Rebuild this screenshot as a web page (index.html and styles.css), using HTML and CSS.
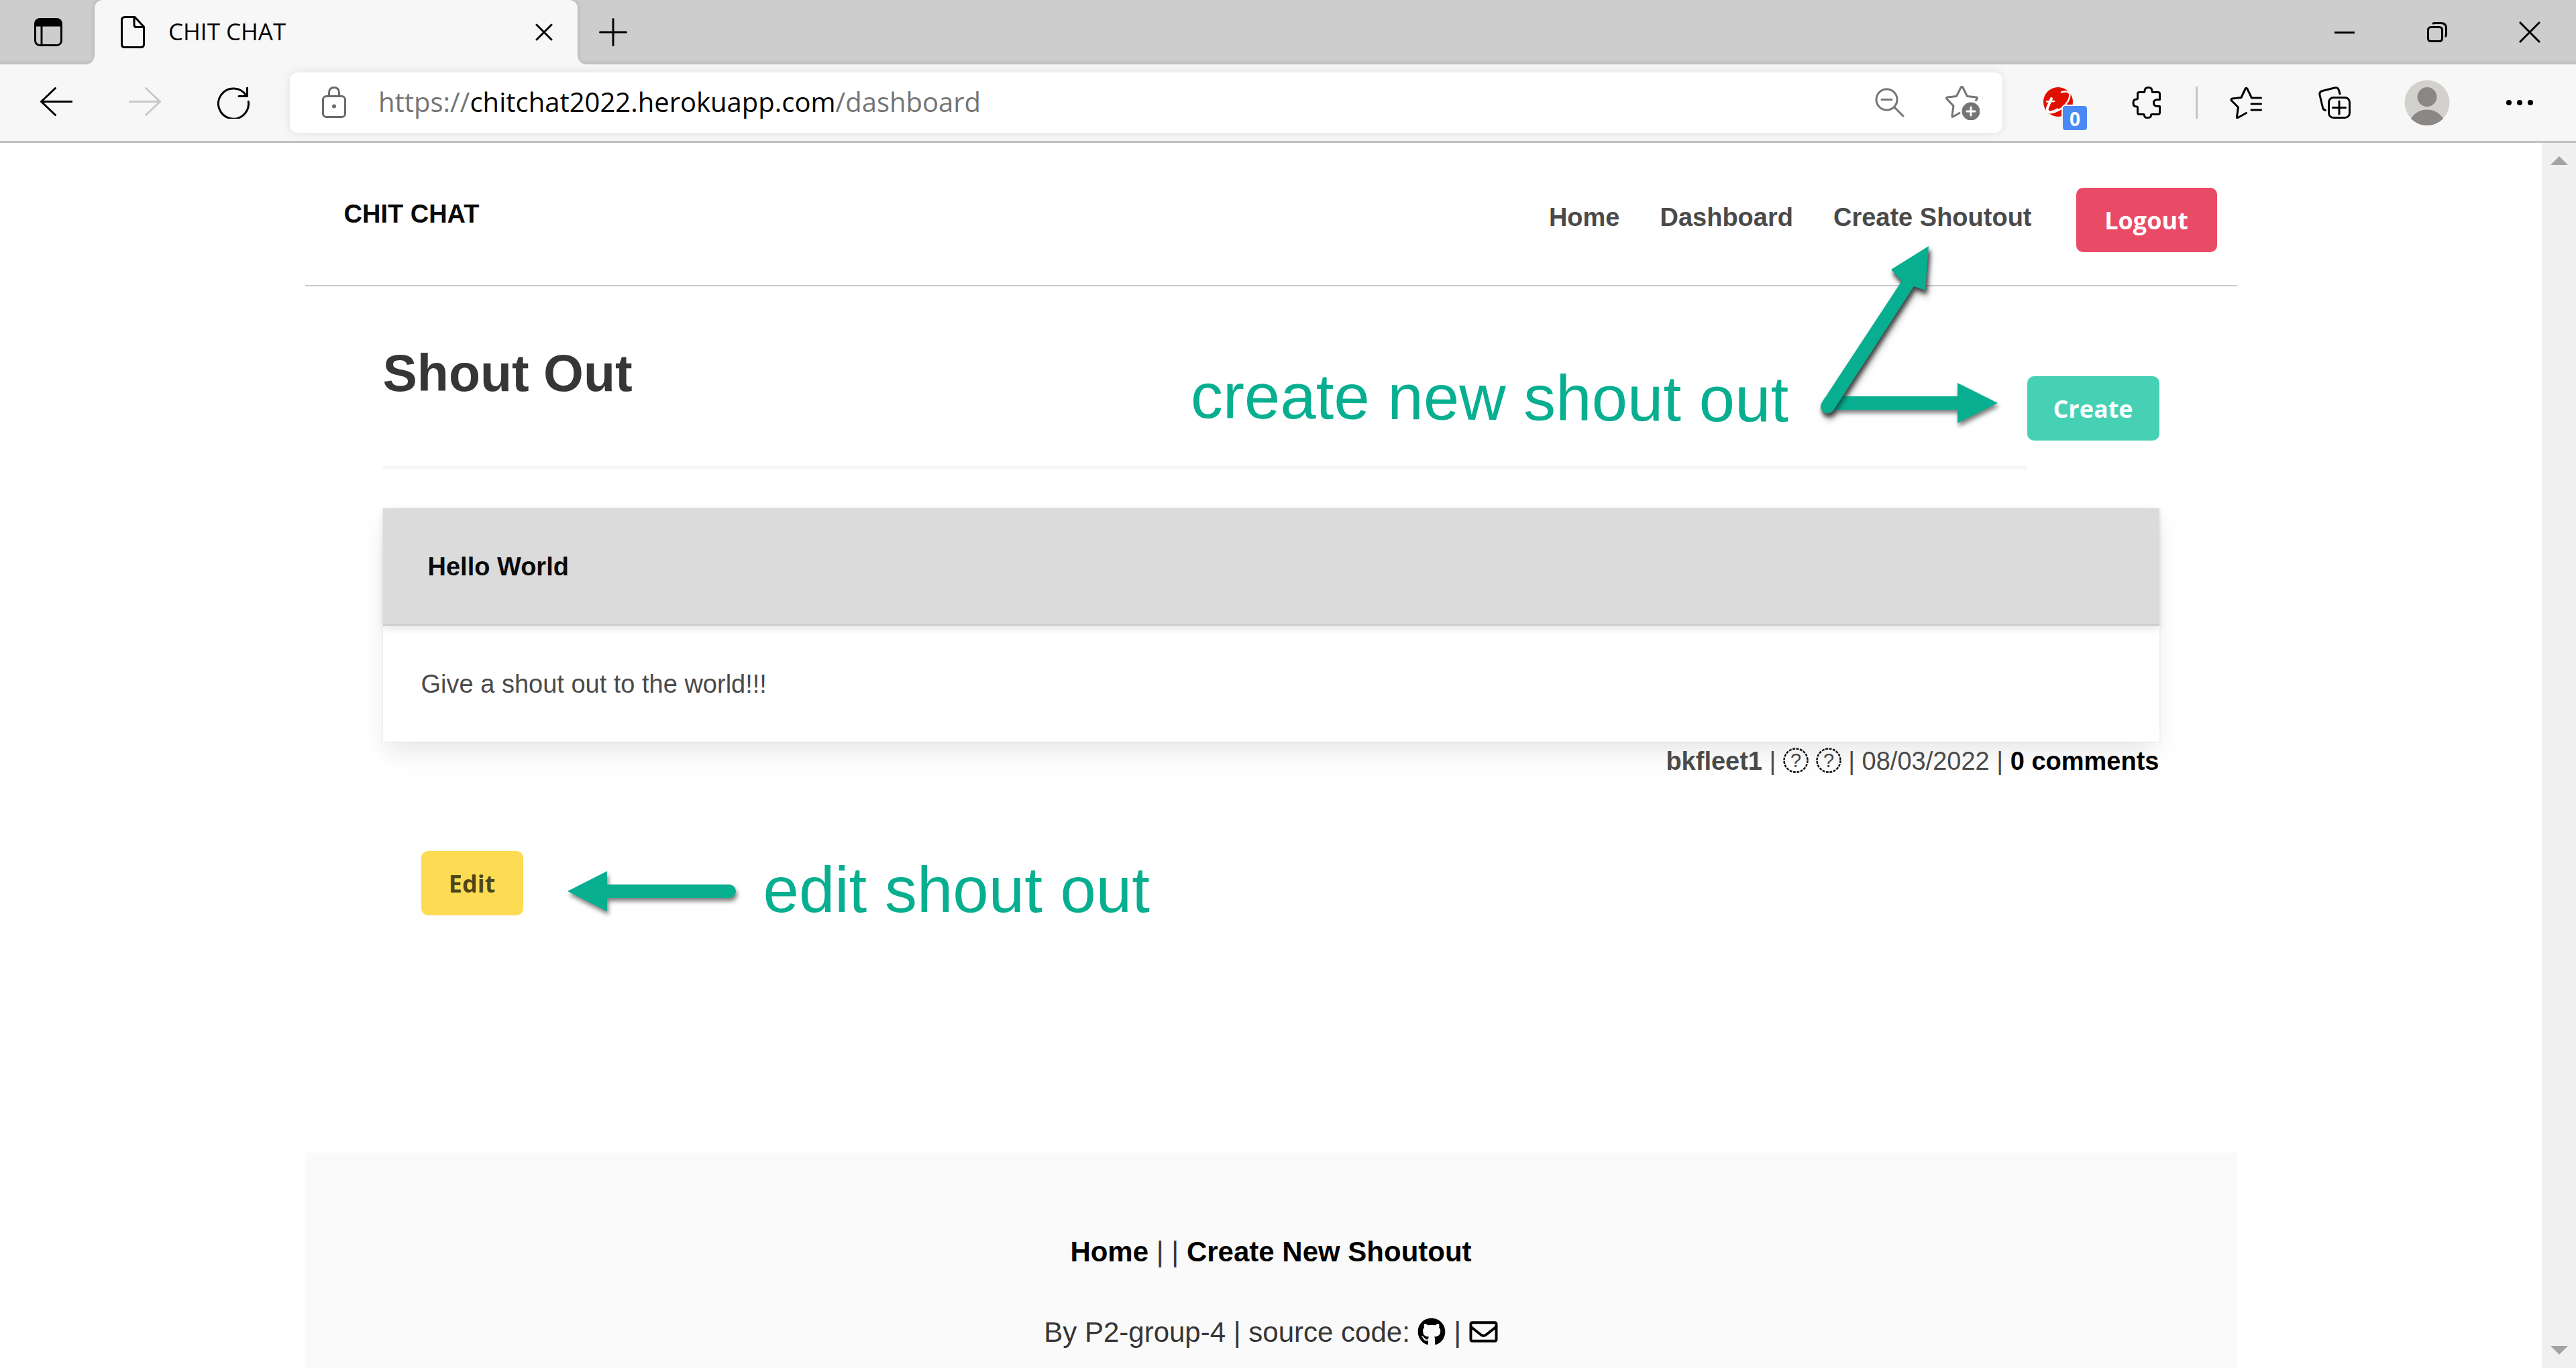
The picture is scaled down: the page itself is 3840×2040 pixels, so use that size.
FILE: index.html
```html
<!DOCTYPE html>
<html lang="en">
<head>
<meta charset="utf-8">
<title>CHIT CHAT</title>
<link rel="stylesheet" href="styles.css">
</head>
<body>
<div class="tabstrip">
  <button class="chrome-btn tab-actions" aria-label="Tab actions menu">
    <svg width="42" height="42" viewBox="0 0 42 42" fill="none" stroke="#000" stroke-width="3"><rect x="1.5" y="1.5" width="39" height="39" rx="7"/><path d="M11 12v28"/><path d="M2 11V8q0-6 6-6h26q6 0 6 6v3z" fill="#000"/></svg>
  </button>
  <div class="tab">
    <svg width="36" height="48" viewBox="0 0 36 48" fill="none" stroke="#000" stroke-width="3" stroke-linejoin="round"><path d="M6 1.500h15L34.500 16v26q0 4.500-4.500 4.500H6q-4.500 0-4.500-4.500V6q0-4.500 4.500-4.500zM20 2v11q0 3.500 3.500 3.500h11"/></svg>
    <span class="tab-title">CHIT CHAT</span>
    <button class="chrome-btn tab-close" aria-label="Close tab">
      <svg width="26" height="26" viewBox="0 0 26 26" fill="none" stroke="#000" stroke-width="3" stroke-linecap="round"><path d="M2 2l22 22M24 2L2 24"/></svg>
    </button>
  </div>
  <button class="chrome-btn new-tab" aria-label="New tab">
    <svg width="42" height="42" viewBox="0 0 42 42" fill="none" stroke="#000" stroke-width="3" stroke-linecap="round"><path d="M21 1.500v39M1.500 21h39"/></svg>
  </button>
  <div class="window-controls">
    <button class="chrome-btn window-btn" aria-label="Minimize"><svg width="32" height="32" viewBox="0 0 32 32" stroke="#000" stroke-width="3"><path d="M1 16.500h30"/></svg></button>
    <button class="chrome-btn window-btn" aria-label="Restore"><svg width="30" height="30" viewBox="0 0 30 30" fill="none" stroke="#000" stroke-width="3"><rect x="1.500" y="7.500" width="21" height="21" rx="4"/><path d="M8 2.500Q9.500 1.500 12 1.500h9q7.500 0 7.500 7.500v9q0 2.500-1.500 4"/></svg></button>
    <button class="chrome-btn window-btn" aria-label="Close"><svg width="32" height="32" viewBox="0 0 32 32" stroke="#000" stroke-width="3"><path d="M1 1l30 30M31 1L1 31"/></svg></button>
  </div>
</div>

<div class="toolbar">
  <button class="chrome-btn tool" aria-label="Back"><svg width="48" height="48" viewBox="0 0 48 48" fill="none" stroke="#000" stroke-width="3" stroke-linecap="round" stroke-linejoin="round"><path d="M22.500 2.500L1.500 22.500l21 20M2 22.500h45"/></svg></button>
  <button class="chrome-btn tool" aria-label="Forward" disabled><svg width="48" height="48" viewBox="0 0 48 48" fill="none" stroke="#c8c8c8" stroke-width="3" stroke-linecap="round" stroke-linejoin="round"><path d="M25.500 2.500l21 20-21 20M46 22.500H1.500"/></svg></button>
  <button class="chrome-btn tool" aria-label="Refresh"><svg width="48" height="48" viewBox="0 0 48 48" fill="none" stroke="#000" stroke-width="3" stroke-linecap="round" stroke-linejoin="round"><path d="M46.300 22.500A22.500 22.500 0 1 1 43 13.500M44.500 2v12.500H32"/></svg></button>
  <div class="address">
    <svg class="lock" width="36" height="48" viewBox="0 0 36 48" fill="none" stroke="#6b6b6b" stroke-width="3"><rect x="1.500" y="14.500" width="33" height="31" rx="5"/><path d="M10.500 14V9.500q0-8 7.500-8t7.500 8V14"/><circle cx="18" cy="29.500" r="3" fill="#6b6b6b" stroke="none"/></svg>
    <div class="url" role="textbox" aria-label="Address and search bar"><span>https://</span><span class="url-host">chitchat2022.herokuapp.com</span><span>/dashboard</span></div>
    <button class="chrome-btn address-btn" aria-label="Zoom"><svg width="44" height="44" viewBox="0 0 44 44" fill="none" stroke="#757575" stroke-width="3" stroke-linecap="round"><circle cx="17.500" cy="17.500" r="15.500"/><path d="M10 17.500h15M29 29l13 13"/></svg></button>
    <button class="chrome-btn address-btn" aria-label="Add to favorites"><svg width="52" height="52" viewBox="0 0 52 52" fill="none" stroke="#757575" stroke-width="3" stroke-linejoin="round" stroke-linecap="round"><path d="M22 41.500L12.500 47q-2 1-1.500-1.500L13 31 3 20.500q-1.500-2 1-2.500L17.500 16.500 24 3.500q1.500-2.500 3 0l6.500 13L47 18q2.500 .5 1 2.500l-1.500 2"/><circle cx="39" cy="39" r="13.500" fill="#757575" stroke="none"/><path d="M39 33v12M33 39h12" stroke="#fff"/></svg></button>
  </div>
  <button class="chrome-btn tool" aria-label="Trend Micro extension">
    <span class="ext"><svg width="46" height="46" viewBox="0 0 46 46" fill="none" stroke="#fff" stroke-linecap="round"><circle cx="22" cy="22" r="22" fill="#e01000" stroke="none"/><path d="M27 7.500Q39 4 39.500 12 39 22 27 31.500 19 37.500 11 38" stroke-width="2.500"/><path d="M12 17L6 31q-1.500 6.500 5 6.500 5-.5 10-4" stroke-width="4"/><path d="M5 21.500l11-.5" stroke-width="2.500"/></svg><span class="badge">0</span></span>
  </button>
  <button class="chrome-btn tool" aria-label="Extensions"><svg width="48" height="48" viewBox="0 0 48 48" fill="none" stroke="#000" stroke-width="3" stroke-linejoin="round"><path d="M12 8.500h6.500q1.500 0 1.500-1.500 0-5.500 5.500-5.500T31 7q0 1.500 1.500 1.500H40q2.500 0 2.500 2.500v8.500h-3.500q-5.500 0-5.500 5t5.500 5h3.500V39q0 2.500-2.500 2.500h-9q-1.500 0-1.500 1.500 0 3.500-5 3.500t-5-3.500q0-1.500-1.500-1.500H12q-2.500 0-2.500-2.500v-7.500q0-1.500-1.500-1.500-5 0-5-5.500t5-5.500q1.500 0 1.500-1.500V11q0-2.500 2.500-2.500z"/></svg></button>
  <div class="divider"></div>
  <button class="chrome-btn tool" aria-label="Favorites"><svg width="48" height="48" viewBox="0 0 48 48" fill="none" stroke="#000" stroke-width="3" stroke-linejoin="round" stroke-linecap="round"><path d="M24.500 39.500l-12.500 7q-2 1-1.500-1.500L12.500 31 2.500 21q-1.500-2.500 1-3L17 16.500 23 3.500q1.500-2.500 3 0l6.500 13.500h14M32 26h14.500M32 35h14.500"/></svg></button>
  <button class="chrome-btn tool" aria-label="Collections"><svg width="48" height="48" viewBox="0 0 48 48" fill="none" stroke="#000" stroke-width="3" stroke-linejoin="round" stroke-linecap="round"><rect x="15.500" y="16.500" width="31" height="30" rx="7"/><path d="M31 22v19M21.500 31.500h19M10.500 35.500q-3-.5-4-4L2 12.500q-1-4.500 4-6L24 2q5-1.500 6.500 3.500l1.500 5.500"/></svg></button>
  <button class="chrome-btn tool tool-wide" aria-label="Profile"><svg width="68" height="68" viewBox="0 0 68 68"><circle cx="34" cy="34" r="33.500" fill="#d3d1cd"/><circle cx="34" cy="25.500" r="14.500" fill="#8b8784"/><path d="M10 58a28 28 0 0 1 48 0 33.500 33.500 0 0 1-48 0z" fill="#8b8784"/></svg></button>
  <button class="chrome-btn tool" aria-label="Settings and more"><svg width="42" height="10" viewBox="0 0 42 10"><circle cx="5" cy="5" r="4"/><circle cx="21" cy="5" r="4"/><circle cx="37" cy="5" r="4"/></svg></button>
</div>

<div class="viewport">
  <div class="page">
    <header class="navbar">
      <a class="brand" href="#">CHIT CHAT</a>
      <nav class="nav-links">
        <a href="#">Home</a>
        <a href="#">Dashboard</a>
        <a href="#">Create Shoutout</a>
      </nav>
      <button class="button is-danger">Logout</button>
    </header>

    <main class="content">
      <div class="title-row">
        <div class="title-block">
          <h1>Shout Out</h1>
          <hr>
        </div>
        <button class="button is-primary">Create</button>
        <div class="note create-note">
          <span class="note-text tilted">create new shout out</span>
          <svg class="shadowed" width="300" height="300" viewBox="0 0 300 300" fill="#07af90"><path d="M26 240h191v-20l60 30-60 30v-20H26a10 10 0 0 1 0-20z"/><path class="shadowed" d="M15 249L134 68l-16-17 56-35-5 66-17-6L32 261a10 10 0 0 1-17-12z"/></svg>
        </div>
      </div>

      <article class="card">
        <h2 class="card-header">Hello World</h2>
        <p class="card-body">Give a shout out to the world!!!</p>
      </article>
      <div class="meta">
        <b>bkfleet1</b> |
        <svg width="38" height="38" viewBox="0 0 38 38"><circle cx="19" cy="19" r="17.500" fill="none" stroke="#111" stroke-width="2.500" stroke-dasharray="4 1.500"/><text x="19" y="29" text-anchor="middle" font-size="29" fill="#444">?</text></svg>
        <svg width="38" height="38" viewBox="0 0 38 38"><circle cx="19" cy="19" r="17.500" fill="none" stroke="#111" stroke-width="2.500" stroke-dasharray="4 1.500"/><text x="19" y="29" text-anchor="middle" font-size="29" fill="#444">?</text></svg>
        | 08/03/2022 | <a href="#">0 comments</a>
      </div>

      <div class="edit-row">
        <button class="button is-warning">Edit</button>
        <svg class="edit-arrow shadowed" width="260" height="120" viewBox="0 0 260 120" fill="#07af90"><path d="M0 60l59-30v20h182a10 10 0 0 1 0 20H59v20z"/></svg>
        <span class="note-text">edit shout out</span>
      </div>
    </main>

    <footer class="footer">
      <p><a href="#">Home</a> | | <a href="#">Create New Shoutout</a></p>
      <p>By P2-group-4 | source code:
        <a href="#" aria-label="GitHub"><svg class="footer-icon" width="42" height="42" viewBox="0 0 496 512"><path d="M165.900 397.400c0 2-2.300 3.600-5.200 3.600-3.300.3-5.600-1.300-5.600-3.600 0-2 2.300-3.600 5.200-3.600 3-.3 5.600 1.300 5.600 3.600zm-31.100-4.500c-.7 2 1.300 4.300 4.300 4.900 2.600 1 5.600 0 6.200-2s-1.300-4.300-4.300-5.200c-2.600-.7-5.500.3-6.200 2.300zm44.200-1.700c-2.900.7-4.900 2.600-4.600 4.900.3 2 2.900 3.300 5.900 2.600 2.900-.7 4.900-2.600 4.600-4.600-.3-1.900-3-3.200-5.900-2.900zM244.800 8C106.100 8 0 113.300 0 252c0 110.900 69.800 205.800 169.500 239.200 12.800 2.300 17.300-5.600 17.300-12.100 0-6.200-.3-40.400-.3-61.400 0 0-70 15-84.700-29.800 0 0-11.400-29.100-27.800-36.600 0 0-22.900-15.700 1.600-15.400 0 0 24.900 2 38.600 25.800 21.900 38.600 58.600 27.500 72.900 20.900 2.300-16 8.800-27.100 16-33.700-55.900-6.200-112.300-14.300-112.300-110.500 0-27.500 7.600-41.300 23.600-58.900-2.600-6.500-11.100-33.300 2.600-67.900 20.900-6.500 69 27 69 27 20-5.600 41.500-8.500 62.800-8.500s42.800 2.900 62.800 8.500c0 0 48.100-33.600 69-27 13.700 34.700 5.200 61.400 2.600 67.900 16 17.700 25.800 31.500 25.800 58.900 0 96.500-58.900 104.200-114.800 110.500 9.200 7.900 17 22.900 17 46.400 0 33.700-.3 75.400-.3 83.600 0 6.500 4.600 14.400 17.300 12.100C428.200 457.800 496 362.900 496 252 496 113.300 383.500 8 244.800 8z"/></svg></a>
        | <a href="#" aria-label="Email"><svg class="footer-icon" width="43" height="42" viewBox="0 0 512 512"><path d="M464 64H48C21.490 64 0 85.490 0 112v288c0 26.510 21.490 48 48 48h416c26.510 0 48-21.490 48-48V112c0-26.510-21.490-48-48-48zm0 48v40.805c-22.422 18.259-58.168 46.651-134.587 106.490-16.841 13.247-50.201 45.072-73.413 44.701-23.208.375-56.579-31.459-73.413-44.701C106.180 199.465 70.425 171.067 48 152.805V112h416zM48 400V214.398c22.914 18.251 55.409 43.862 104.938 82.646 21.857 17.205 60.134 55.186 103.062 54.955 42.717.231 80.509-37.199 103.053-54.947 49.528-38.783 82.032-64.401 104.947-82.653V400H48z"/></svg></a></p>
    </footer>
  </div>
  <div class="scrollbar" aria-hidden="true">
    <svg width="26" height="13" viewBox="0 0 26 13" fill="#a3a3a3"><path d="M13 0l13 13H0z"/></svg>
    <svg width="26" height="13" viewBox="0 0 26 13" fill="#a3a3a3"><path d="M0 0h26L13 13z"/></svg>
  </div>
</div>
</body>
</html>
```
FILE: styles.css
```css
* { box-sizing: border-box; }
html, body { margin: 0; }
body {
  min-height: 100vh;
  display: flex;
  flex-direction: column;
  background: #fff;
  color: #4a4a4a;
  font: 38px/58px "Liberation Sans", Arial, sans-serif;
}
h1, h2, p, hr { margin: 0; }
a { color: inherit; text-decoration: none; font-weight: bold; }
svg { display: block; flex: none; }

/* browser chrome */
.chrome-btn {
  display: flex;
  align-items: center;
  justify-content: center;
  border: 0;
  padding: 0;
  background: none;
}
.tabstrip {
  display: flex;
  height: 96px;
  background: linear-gradient(#cdcdcd 88px, #bdbdbd);
  font-family: "Open Sans", "Noto Sans", sans-serif;
}
.tab-actions { width: 141px; padding-left: 3px; }
.tab {
  position: relative;
  display: flex;
  align-items: center;
  width: 720px;
  padding: 0 37px 0 39px;
  border-radius: 12px 12px 0 0;
  background: #f7f7f7;
  box-shadow: 0 0 6px rgba(0, 0, 0, .2);
  clip-path: inset(0 -12px);
}
.tab::before, .tab::after {
  content: "";
  position: absolute;
  bottom: 0;
  width: 12px;
  height: 12px;
}
.tab::before { left: -12px; background: radial-gradient(circle at 0 0, transparent 11px, #f7f7f7 12px); }
.tab::after { right: -12px; background: radial-gradient(circle at 100% 0, transparent 11px, #f7f7f7 12px); }
.tab-title { flex: 1; padding-left: 35px; font-size: 35px; line-height: 44px; padding-bottom: 2px; color: #000; }
.new-tab { width: 105px; }
.window-controls { display: flex; margin-left: auto; }
.window-btn { width: 138px; }

.toolbar {
  display: flex;
  align-items: center;
  height: 117px;
  padding: 0 18px;
  border-bottom: 3px solid #c0c0c0;
  background: #f7f7f7;
}
.tool { width: 132px; height: 96px; }
.tool-wide { width: 144px; }
.divider { width: 3px; height: 48px; margin: 0 6px; background: #c4c4c4; }
.address {
  flex: 1;
  display: flex;
  align-items: center;
  height: 90px;
  margin: 0 18px;
  padding: 0 6px 0 48px;
  border-radius: 12px;
  background: #fff;
  box-shadow: 0 0 14px rgba(0, 0, 0, .1);
}
.url {
  flex: 1;
  padding: 0 0 2px 48px;
  font: 40px/58px "Open Sans", "Noto Sans", sans-serif;
  color: #757575;
}
.url-host { color: #000; }
.address-btn { width: 108px; height: 84px; }
.ext { position: relative; }
.badge {
  position: absolute;
  left: 29px;
  top: 28px;
  width: 36px;
  height: 36px;
  border-radius: 4px;
  background: #4a89f5;
  box-shadow: 0 0 0 2px #f7f7f7;
  color: #fff;
  font: bold 28px/38px "Open Sans", sans-serif;
}

/* page viewport */
.viewport { flex: 1; display: flex; }
.page {
  flex: 1;
  display: flex;
  flex-direction: column;
  max-width: 2880px;
  margin: 0 auto;
}
.scrollbar {
  display: flex;
  flex-direction: column;
  justify-content: space-between;
  align-items: center;
  width: 51px;
  padding: 20px 0;
  background: #f0f0f0;
}

.button {
  flex: none;
  height: 96px;
  padding: 2px 0 0;
  border: 0;
  border-radius: 10px;
  font: bold 36px/58px "Open Sans", "Noto Sans", sans-serif;
  color: #fff;
}
.is-danger { width: 210px; background: #e94b67; }
.is-primary { width: 197px; background: #46d1b4; }
.is-warning { width: 152px; background: #fddc54; color: rgba(0, 0, 0, .7); }

.navbar {
  display: flex;
  align-items: flex-start;
  padding: 67px 30px 49px 58px;
  border-bottom: 2px solid #cacaca;
}
.brand { flex: 1; line-height: 78px; color: #0a0a0a; }
.nav-links { display: flex; gap: 60px; margin-right: 66px; line-height: 88px; }

.content { padding: 86px 116px 330px; }
.title-row { position: relative; display: flex; align-items: flex-start; padding-bottom: 58px; }
.title-row .button { margin-top: 48px; }
.title-block { flex: 1; }
h1 { font-size: 77px; line-height: 86px; color: #363636; }
hr { height: 5px; margin-top: 96px; border: 0; background: #f5f5f5; }

.card {
  background: #fff;
  box-shadow: 0 19px 38px -5px rgba(10, 10, 10, .1), 0 0 0 2px rgba(10, 10, 10, .02);
}
.card-header {
  padding: 58px 67px 57px;
  border-bottom: 2px solid #cacaca;
  background: #dbdbdb;
  box-shadow: 0 5px 10px rgba(10, 10, 10, .1);
  font-size: 38px;
  color: #0a0a0a;
}
.card-body { padding: 58px 57px 57px; }
.meta { position: relative; text-align: right; }
.meta svg { display: inline-block; vertical-align: -5px; }
.meta a { color: #000; }

.edit-row { display: flex; align-items: flex-start; margin-top: 105px; padding-left: 57px; }
.edit-arrow { margin: 0 32px 0 66px; }

/* callouts drawn over the page */
.note-text { font-size: 96px; line-height: 116px; color: #07af90; white-space: nowrap; }
.tilted { transform: rotate(.35deg); }
.shadowed { filter: drop-shadow(2px 5px 3px rgba(0, 0, 0, .5)); }
.create-note {
  position: absolute;
  right: 218px;
  top: -162px;
  display: flex;
  align-items: flex-end;
  gap: 34px;
}

.footer {
  flex: 1;
  padding: 116px 0 16px;
  background: #fafafa;
  color: #363636;
  font-size: 42px;
  line-height: 64px;
  text-align: center;
}
.footer p + p { margin-top: 56px; }
.footer a { color: #000; }
.footer-icon { display: inline-block; vertical-align: -6px; }
```
